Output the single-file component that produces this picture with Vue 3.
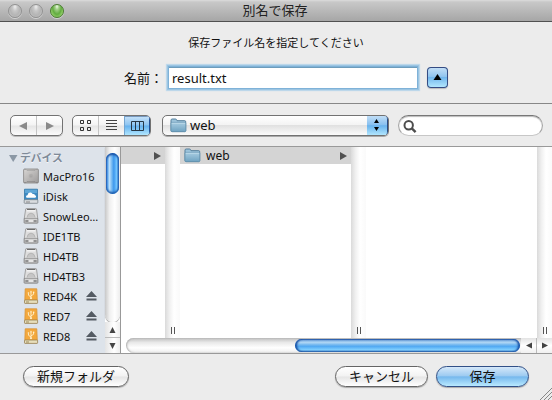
<script setup>
const devices = [
  { name: 'MacPro16', kind: 'mac' },
  { name: 'iDisk', kind: 'idisk' },
  { name: 'SnowLeo…', kind: 'hd' },
  { name: 'IDE1TB', kind: 'hd' },
  { name: 'HD4TB', kind: 'hd' },
  { name: 'HD4TB3', kind: 'hd' },
  { name: 'RED4K', kind: 'ext', eject: true },
  { name: 'RED7', kind: 'ext', eject: true },
  { name: 'RED8', kind: 'ext', eject: true },
]
</script>

<template>
  <div class="dialog">
    <svg class="defs" width="0" height="0">
      <defs>
        <linearGradient id="metal" x1="0" y1="0" x2="1" y2="1">
          <stop offset="0" stop-color="#d8d6d4" /><stop offset="1" stop-color="#9c9a9a" />
        </linearGradient>
        <linearGradient id="folderFill" x1="0" y1="0" x2="0" y2="1">
          <stop offset="0" stop-color="#a9cde2" /><stop offset="1" stop-color="#6fa3c2" />
        </linearGradient>
        <symbol id="folder" viewBox="0 0 17 15">
          <path d="M1 12.5V2.2Q1 1 2.2 1H5.5Q6.4 1 6.6 2L7 2.7H14.8Q15.7 2.7 15.7 3.8V12.5Q15.7 13.6 14.6 13.6H2Q1 13.6 1 12.5Z" fill="#9cc3da" stroke="#547f9c" />
          <path d="M1 5.2Q1 4.4 1.8 4.4H15Q15.8 4.4 15.8 5.2V12.6Q15.8 13.6 14.8 13.6H2Q1 13.6 1 12.6Z" fill="url(#folderFill)" stroke="#6594b0" stroke-width=".8" />
          <path d="M1.8 5.2H15" stroke="#c5e0ee" stroke-width=".8" />
        </symbol>
        <symbol id="mac" viewBox="0 0 16 16">
          <rect x=".6" y="1" width="14.8" height="14" rx="1" fill="url(#metal)" stroke="#858382" stroke-width=".8" />
          <path d="M1 1.4H3L4 2.4H12L13 1.4H15" fill="none" stroke="#999" stroke-width=".6" />
          <path d="M1 14.6H3L4 13.6H12L13 14.6H15" fill="none" stroke="#807e7d" stroke-width=".6" />
          <circle cx="8" cy="8" r="1.8" fill="#b9b7b6" stroke="#a5a3a2" stroke-width=".5" />
          <circle cx="8" cy="8" r=".6" fill="#777" />
        </symbol>
        <symbol id="idisk" viewBox="0 0 16 16">
          <path d="M1.5 12V1.2H14.5V12Z" fill="#3e8ac2" stroke="#3578a8" stroke-width=".8" />
          <path d="M2 1.8H14V5H2Z" fill="#5ea6d6" />
          <path d="M4.2 9.8Q2.9 9.8 3 8.4Q3.2 7.2 4.5 7.2Q4.8 4.6 7 4.5Q9 4.2 9.7 6Q11.5 5.6 12 7.2Q13.3 7.4 13.1 8.8Q12.9 9.8 11.8 9.8Z" fill="#fff" />
          <rect x="1.2" y="11.7" width="13.6" height="3.6" rx=".6" fill="#d9dcdf" stroke="#7c858b" stroke-width=".8" />
          <path d="M3 14H7" stroke="#888" />
        </symbol>
        <symbol id="hd" viewBox="0 0 16 16">
          <path d="M2.7 1Q2.8 .5 3.5 .5H12.7Q13.3 .5 13.5 1L14.8 10.8H1.2Z" fill="#dedede" stroke="#909090" stroke-width=".8" />
          <path d="M4 1.1H12.3L12.5 3.6H3.8Z" fill="#f2f2f2" />
          <path d="M4 1.5H12.3" stroke="#6d6d6d" stroke-width="1" />
          <path d="M4 9.5Q4.4 5.4 8 5.1Q11.6 5.4 12.2 9.5" fill="#c6c6c6" stroke="#aaa" stroke-width=".7" />
          <rect x="1.1" y="10.4" width="13.8" height="4.8" rx=".7" fill="#bdbdbd" stroke="#808080" stroke-width=".8" />
          <path d="M2.5 13H5M11 13H13.5" stroke="#666" stroke-width="1.2" />
          <path d="M6 13H10" stroke="#eee" stroke-width="1.6" />
          <path d="M2 11.2H14" stroke="#eee" stroke-width=".7" />
        </symbol>
        <symbol id="ext" viewBox="0 0 16 16">
          <path d="M1.8 12.5L2.2 .8H13.8L14.3 12.5Z" fill="#f3a83c" stroke="#d7943a" stroke-width=".8" />
          <path d="M8 10.2V4M8 9L5.5 7.3V5.5M8 7.8L10.6 6.3V4.3" fill="none" stroke="#fff1cc" stroke-width=".9" />
          <path d="M8 2.4L6.9 4.3H9.1Z" fill="#fff1cc" /><circle cx="8" cy="10.3" r="1" fill="#fff1cc" />
          <circle cx="5.4" cy="5" r=".8" fill="#fff1cc" /><rect x="9.9" y="3.6" width="1.4" height="1.4" fill="#fff1cc" />
          <rect x="1.5" y="12" width="13.1" height="3.4" rx=".6" fill="#e7dfbc" stroke="#967e4f" stroke-width=".8" />
          <path d="M3 14H6" stroke="#9a8b5c" />
        </symbol>
      </defs>
    </svg>

    <header class="titlebar">
      <div class="lights"><i class="light"></i><i class="light"></i><i class="light green"></i></div>
      <span class="title">別名で保存</span>
    </header>

    <section class="prompt">
      <p class="message">保存ファイル名を指定してください</p>
      <div class="name-row">
        <label class="name-label">名前：</label>
        <div class="field">result.txt</div>
        <div class="disclose">
          <svg width="21" height="21"><path d="M10.5 7L14.5 13H6.5Z" fill="#000" /></svg>
        </div>
      </div>
    </section>

    <nav class="toolbar">
      <div class="seg nav-seg">
        <div class="cell"><svg width="9" height="8"><path d="M0 4L8 0V8Z" fill="#8a8a8a" /></svg></div>
        <div class="cell"><svg width="9" height="8"><path d="M9 4L1 0V8Z" fill="#8a8a8a" /></svg></div>
      </div>
      <div class="seg view-seg">
        <div class="cell">
          <svg width="12" height="11" fill="none" stroke="#333"><path d="M.5 .5H3.5V3.5H.5ZM7.5 .5H10.5V3.5H7.5ZM.5 7.5H3.5V10.5H.5ZM7.5 7.5H10.5V10.5H7.5Z" /></svg>
        </div>
        <div class="cell">
          <svg width="11" height="11" stroke="#444"><path d="M0 .5H11M0 3.5H11M0 6.5H11M0 9.5H11" /></svg>
        </div>
        <div class="cell active">
          <svg width="13" height="10" fill="none" stroke="#263746"><path d="M.5 .5H12.5V9.5H.5ZM4.5 .5V9.5M8.5 .5V9.5" /></svg>
        </div>
      </div>
      <div class="popup">
        <svg class="folder" width="17" height="15"><use href="#folder" /></svg>
        <span>web</span>
        <div class="cap"><svg width="20" height="20"><path d="M9.5 4L12 8H7ZM9.5 16L12 12H7Z" fill="#000" /></svg></div>
      </div>
      <div class="search">
        <svg width="14" height="14" fill="none" stroke="#4d4d4d"><circle cx="5.7" cy="5.2" r="4.2" stroke-width="2" /><path d="M8.8 8.3L12.6 12.1" stroke-width="2.4" /></svg>
      </div>
    </nav>

    <main class="browser">
      <aside class="sidebar">
        <div class="heading">
          <svg width="9" height="7"><path d="M0 0H8.5L4.2 7Z" fill="#8b98a5" /></svg>
          <span>デバイス</span>
        </div>
        <div v-for="d in devices" :key="d.name" class="device">
          <svg class="icon" width="16" height="16"><use :href="'#' + d.kind" /></svg>
          <span class="label">{{ d.name }}</span>
          <svg v-if="d.eject" class="eject" width="11" height="10"><path d="M5.5 0L11 6H0ZM.5 7.5H10.5V9.5H.5Z" fill="#545b63" /></svg>
        </div>
      </aside>

      <div class="vscroll">
        <div class="vtrack"><div class="vthumb"></div></div>
        <div class="arrow"><svg width="7" height="6"><path d="M3.5 0L6.5 6H.5Z" fill="#444" /></svg></div>
        <div class="arrow"><svg width="7" height="6"><path d="M3.5 6L6.5 0H.5Z" fill="#444" /></svg></div>
      </div>

      <div class="content">
        <div class="columns">
          <div class="column first">
            <div class="entry"><svg class="more" width="7" height="8"><path d="M0 0L7 4L0 8Z" fill="#505050" /></svg></div>
          </div>
          <div class="divider"><i class="grip"></i></div>
          <div class="column">
            <div class="entry">
              <svg width="17" height="15"><use href="#folder" /></svg>
              <span>web</span>
              <svg class="more" width="7" height="8"><path d="M0 0L7 4L0 8Z" fill="#505050" /></svg>
            </div>
          </div>
          <div class="divider"><i class="grip"></i></div>
          <div class="column"></div>
          <div class="divider"><i class="grip"></i></div>
        </div>
        <div class="hscroll">
          <div class="htrack"><div class="hthumb"></div></div>
          <div class="harrow"><svg width="6" height="7"><path d="M0 3.5L6 .5V6.5Z" fill="#444" /></svg></div>
          <div class="harrow"><svg width="6" height="7"><path d="M6 3.5L0 .5V6.5Z" fill="#444" /></svg></div>
        </div>
      </div>
    </main>

    <footer class="footer">
      <button class="btn new">新規フォルダ</button>
      <button class="btn cancel">キャンセル</button>
      <button class="btn save">保存</button>
      <svg class="resize" width="12" height="12" stroke="#888"><path d="M0 12L12 0M4 12L12 4M8 12L12 8" /></svg>
    </footer>
  </div>
</template>

<style>
body { margin: 0; overflow: hidden; }
</style>

<style scoped>
* { box-sizing: border-box; }
svg { display: block; flex: none; }
.defs { position: absolute; }
.dialog {
  position: relative;
  width: 552px; height: 400px;
  display: flex; flex-direction: column;
  background: #ececec; color: #111;
  font-family: "Noto Sans", "Noto Sans CJK JP", sans-serif;
  font-size: 13px; line-height: 1;
  overflow: hidden; white-space: nowrap;
}
.titlebar {
  height: 22px; flex: none;
  display: grid; grid-template-columns: 60px 1fr 62px; align-items: center;
  background: linear-gradient(#dcdcdc 0, #c8c8c8 2px, #a6a6a6 21px);
  border-bottom: 1px solid #515151;
}
.lights { display: flex; gap: 7px; padding-left: 8px; }
.light {
  width: 14px; height: 14px; flex: none; border-radius: 50%;
  border: 1px solid #929292;
  background: radial-gradient(ellipse at 50% 15%, #eee 0, #c6c6c6 30%, #b4b4b4 60%, #cfcfcf 100%);
  box-shadow: 0 1px 0 #d0d0d0;
}
.light.green {
  border-color: #4b7c32;
  background: radial-gradient(ellipse at 50% 12%, #f0fae8 0, #a2cf88 22%, #62ac40 52%, #c0f290 100%);
}
.title { text-align: center; color: #222; }
.prompt { height: 82px; flex: none; border-bottom: 1px solid #878787; }
.message { margin: 15px 0 0; text-align: center; font-size: 11px; line-height: 12px; }
.name-row { display: flex; align-items: center; height: 27px; margin-top: 15px; padding-left: 124px; }
.name-label { width: 45px; padding-top: 2px; }
.field {
  width: 248px; height: 21px; padding-left: 3px; line-height: 21px;
  background: #fff; border-top: 1px solid #6d9cbb;
  box-shadow: 0 0 0 1px #7fb2d8, 0 0 1px 2px #9cc5e2, 0 0 1px 3px #c3dbec;
}
.disclose {
  width: 21px; height: 21px; margin-left: 10px; border-radius: 4px;
  background: linear-gradient(#c7e1f7, #92c5ef 45%, #72b7ed 50%, #b8ebff);
  box-shadow: inset 0 0 0 1px #354c83, 0 1px 1px #bbb;
}
.toolbar { height: 43px; flex: none; display: flex; align-items: flex-start; padding: 11px 9px 0 10px; border-bottom: 1px solid #999; }
.seg {
  display: flex; height: 21px; border: 1px solid #727272; border-radius: 5px; overflow: hidden;
  background: linear-gradient(#fff 0, #f4f4f4 48%, #e5e5e5 52%, #fbfbfb);
  box-shadow: 0 1px 0 #bbb;
}
.cell { flex: 1; display: flex; align-items: center; justify-content: center; }
.cell + .cell { border-left: 1px solid #c4c4c4; }
.nav-seg { width: 53px; }
.view-seg { width: 79px; margin-left: 9px; }
.cell.active { background: linear-gradient(#c8e3fa, #8cc4f1 48%, #65b1ee 52%, #b0e6ff); box-shadow: inset -1px 0 #244f93, inset 0 1px #7798bd; border-left-color: #74a5d0; }
.popup {
  display: flex; align-items: center; width: 227px; height: 21px; margin-left: 11px; padding-left: 7px;
  border: 1px solid #727272; border-radius: 5px; overflow: hidden;
  background: linear-gradient(#fff 0, #f4f4f4 45%, #e1e1e1 50%, #fbfbfb);
  box-shadow: 0 1px 0 #aaa;
}
.popup span { margin-left: 3px; }
.cap { margin-left: auto; width: 21px; height: 21px; border-radius: 0 4px 4px 0; background: linear-gradient(#c7e1f7, #88c0ef 47%, #69b3ed 51%, #b8ebff); box-shadow: inset -1px 0 #294b85, inset 0 1px #496796; }
.search {
  width: 145px; height: 21px; margin-left: 9px; padding: 4px 0 0 4px;
  background: #fff; border: 1px solid #a4a4a4; border-top-color: #777; border-bottom-color: #c7c7c7; border-radius: 11px;
  box-shadow: inset 0 1px 1px #bbb;
}
.browser { height: 207px; flex: none; display: flex; border-bottom: 1px solid #999; background: #fff; }
.sidebar { width: 105px; flex: none; background: #dde3ea; font-size: 11px; }
.heading { display: flex; align-items: center; height: 19px; padding: 3px 0 0 9px; gap: 2px; color: #7e8a98; font-size: 10.8px; font-weight: 700; text-shadow: 0 1px #f5f7fa; }
.device { display: flex; align-items: center; height: 20px; padding-left: 23px; }
.label { width: 58px; margin-left: 4px; }
.eject { margin-left: -15px; }
.vscroll { width: 16px; flex: none; display: flex; flex-direction: column; border-right: 1px solid #999; background: #fff; }
.vtrack { height: 175px; padding: 6px 1px 0; border-radius: 0 0 8px 8px; background: linear-gradient(90deg, #c8c8c8, #efefef 30%, #fff 65%, #ededed); box-shadow: 0 1px 1px #999; }
.vthumb {
  width: 13px; height: 41px; border-radius: 7px;
  background: linear-gradient(90deg, #2966c4 0, #64adf0 13%, #bce0fb 27%, #68b2f0 48%, #3d98ee 60%, #75c7ff 82%, #2664b3);
  box-shadow: inset 0 2px 2px #1952a6, inset 0 -2px 2px #2261b0;
}
.arrow { flex: 1; display: flex; align-items: center; justify-content: center; background: linear-gradient(90deg, #e4e4e4, #fff 60%, #eee); }
.arrow + .arrow { border-top: 1px solid #bbb; }
.content { width: 431px; display: flex; flex-direction: column; }
.columns { flex: 1; display: flex; }
.column { width: 171px; flex: none; }
.column.first { width: 44px; }
.entry { display: flex; align-items: center; height: 17px; padding-left: 4px; background: #d4d4d4; font-size: 12px; }
.entry span { margin-left: 5px; }
.more { margin: 0 4px 0 auto; }
.divider { width: 15px; flex: none; display: flex; align-items: flex-end; justify-content: center; padding-bottom: 4px; background: linear-gradient(90deg, #dadada, #f0f0f0 30%, #fff 60%, #fafafa); }
.grip { width: 4px; height: 7px; border: solid #555; border-width: 0 1px; }
.hscroll { height: 15px; flex: none; display: flex; background: #fff; }
.htrack { width: 400px; padding: 1px 1px 0 0; display: flex; justify-content: flex-end; border-radius: 8px 0 0 8px; background: linear-gradient(#c0c0c0, #e9e9e9 30%, #fff 65%, #eee); box-shadow: inset 1px 0 2px #aaa; margin-left: 5px; width: 395px; }
.hthumb {
  width: 225px; height: 13px; border-radius: 7px;
  background: linear-gradient(#2453a0 0, #87b6e4 12%, #aed6f5 28%, #6eb5ef 46%, #53aaf3 58%, #84d2ff 85%, #3269aa);
  box-shadow: inset 2px 0 2px #1952a6, inset -2px 0 2px #1952a6;
}
.harrow { flex: 1; display: flex; align-items: center; justify-content: center; background: linear-gradient(#e3e3e3, #fff 50%, #f0f0f0); }
.harrow + .harrow { border-left: 1px solid #bbb; }
.footer { position: relative; flex: 1; display: flex; align-items: flex-start; padding: 12px 23px 0; }
.btn {
  height: 21px; padding: 0; border: 1px solid #656565; border-radius: 11px;
  font: inherit; line-height: 19px; color: #111;
  background: linear-gradient(#fff 0, #f2f2f2 48%, #e5e5e5 52%, #fff);
  box-shadow: 0 1px 1px #aaa;
}
.new { width: 106px; }
.cancel { width: 93px; margin-left: auto; }
.save { width: 93px; margin-left: 8px; border-color: #315087; background: linear-gradient(#d5e8f9 0, #9ecbf1 46%, #76b8ed 52%, #b9eaff); }
.resize { position: absolute; right: 0; bottom: 0; }
</style>
